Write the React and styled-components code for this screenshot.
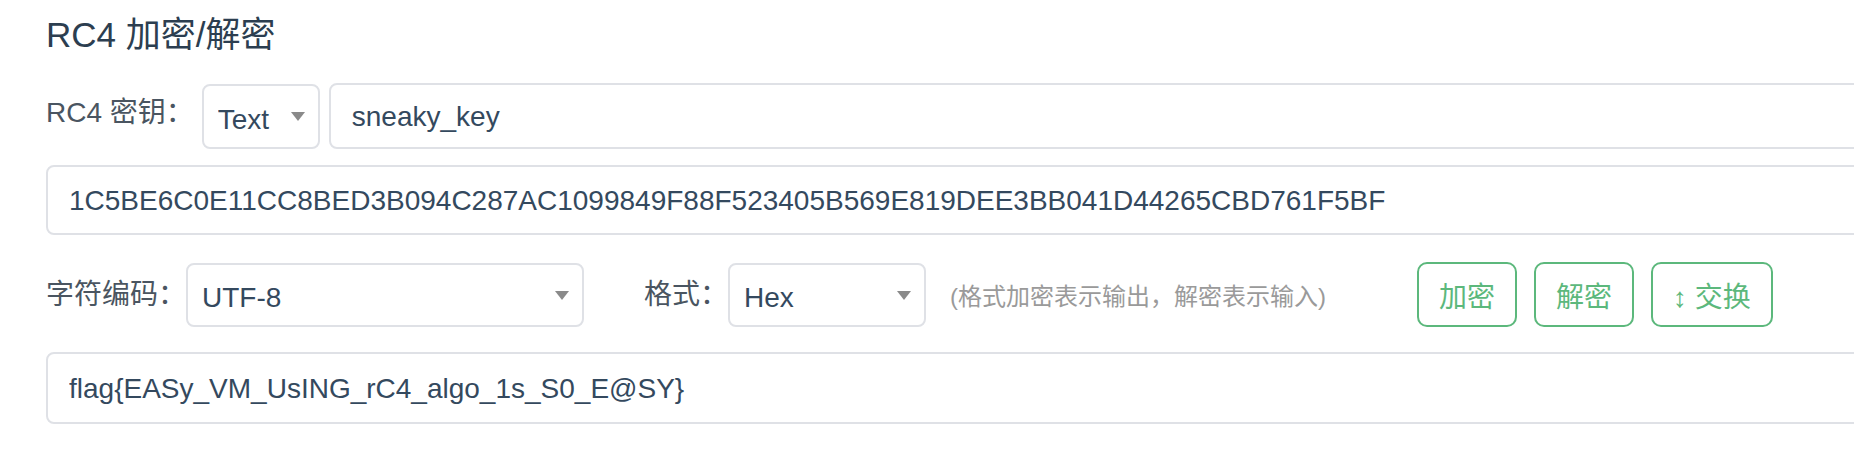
import styled, { createGlobalStyle } from "styled-components"

const GlobalStyle = createGlobalStyle`
  html, body {
    margin: 0;
    padding: 0;
    background: #fff;
    overflow: hidden;
  }
  body {
    font-family: "Liberation Sans", "Noto Sans CJK SC", sans-serif;
  }
`

const App = () => {
  return (
    <>
      <GlobalStyle />
      <Page>
        <Title>RC4 加密/解密</Title>

        <Row $top={27}>
          <Label $space={8} $lift>RC4 密钥：</Label>
          <SelectWrap $width={118}>
            <Select $h={65} defaultValue="text">
              <option value="text">Text</option>
              <option value="hex">Hex</option>
            </Select>
          </SelectWrap>
          <TextInput $h={66} $ml={9} readOnly value="sneaky_key" />
        </Row>

        <Row $top={16}>
          <TextInput
            $h={70}
            readOnly
            value="1C5BE6C0E11CC8BED3B094C287AC1099849F88F523405B569E819DEE3BB041D44265CBD761F5BF"
          />
        </Row>

        <Row $top={27}>
          <Label>字符编码：</Label>
          <SelectWrap $width={398}>
            <Select $h={64} defaultValue="utf8">
              <option value="utf8">UTF-8</option>
            </Select>
          </SelectWrap>
          <Label $ml={60}>格式：</Label>
          <SelectWrap $width={198}>
            <Select $h={64} defaultValue="hex">
              <option value="hex">Hex</option>
            </Select>
          </SelectWrap>
          <Hint>(格式加密表示输出，解密表示输入)</Hint>
          <Buttons>
            <Button>加密</Button>
            <Button>解密</Button>
            <Button>↕ 交换</Button>
          </Buttons>
        </Row>

        <Row $top={25}>
          <TextInput $h={72} readOnly value="flag{EASy_VM_UsING_rC4_algo_1s_S0_E@SY}" />
        </Row>
      </Page>
    </>
  )
}

export default App

const Page = styled.div`
    width: 1900px;
    padding: 14px 0 0 46px;
    box-sizing: border-box;
    color: #2c3e50;
`

const Title = styled.h2`
    margin: 0;
    font-size: 35px;
    font-weight: normal;
    line-height: 42px;
    color: #2c3e50;
`

const Row = styled.div`
    display: flex;
    align-items: center;
    margin-top: ${p => p.$top}px;
`

const Label = styled.label`
    flex: none;
    font-size: 28px;
    line-height: 40px;
    color: #4a5561;
    white-space: nowrap;
    margin-left: ${p => p.$ml || 0}px;
    margin-right: ${p => p.$space || 0}px;
    padding-bottom: ${p => (p.$lift ? 6 : 0)}px;
`

const SelectWrap = styled.div`
    position: relative;
    flex: none;
    width: ${p => p.$width}px;

    &::after {
        content: "";
        position: absolute;
        right: 15px;
        top: 50%;
        margin-top: -4px;
        border-left: 7px solid transparent;
        border-right: 7px solid transparent;
        border-top: 9px solid #8a8a8a;
        pointer-events: none;
    }
`

const Select = styled.select`
    appearance: none;
    display: block;
    width: 100%;
    height: ${p => p.$h}px;
    padding: 6px 36px 0 14px;
    box-sizing: border-box;
    border: 2px solid #dfe1e6;
    border-radius: 8px;
    background: #fff;
    font-family: inherit;
    font-size: 28px;
    color: #34495e;
    outline: none;
`

const TextInput = styled.input`
    flex: 1;
    min-width: 0;
    height: ${p => p.$h}px;
    margin-left: ${p => p.$ml || 0}px;
    padding: 2px 21px 0;
    box-sizing: border-box;
    border: 2px solid #dfe1e6;
    border-radius: 8px;
    background: #fff;
    font-family: inherit;
    font-size: 28px;
    color: #34495e;
    outline: none;
`

const Hint = styled.span`
    flex: none;
    width: 467px;
    margin-left: 24px;
    font-size: 24px;
    color: #9a9a9a;
    white-space: nowrap;
`

const Buttons = styled.div`
    display: flex;
    gap: 17px;
`

const Button = styled.button`
    height: 65px;
    padding: 0 20px;
    border: 2px solid #5cb87c;
    border-radius: 10px;
    background: #fff;
    color: #5cb87c;
    font-family: inherit;
    font-size: 28px;
    cursor: pointer;
`
